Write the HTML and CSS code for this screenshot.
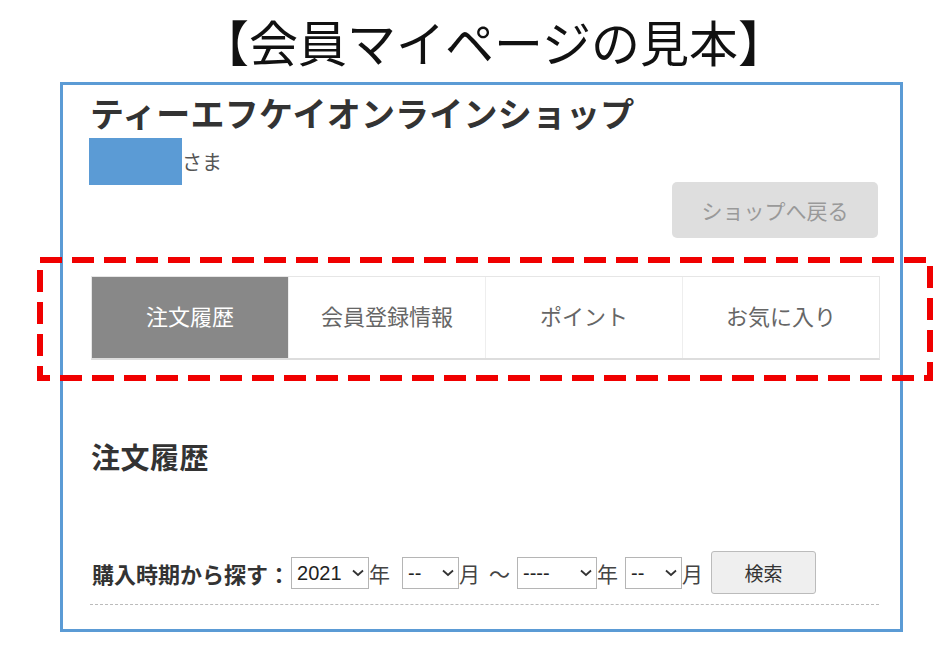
FILE: index.html
```html
<!DOCTYPE html>
<html lang="ja">
<head>
    <meta charset="UTF-8">
    <meta name="viewport" content="width=device-width, initial-scale=1.0">
    <title>会員マイページの見本</title>
    <link rel="stylesheet" href="styles.css">
</head>
<body>
    <h1 class="sample-title">【会員マイページの見本】</h1>

    <div class="mypage">
        <div class="shop-name">ティーエフケイオンラインショップ</div>
        <div class="user-row">
            <span class="user-mask"></span><span class="user-suffix">さま</span>
        </div>
        <div class="back-row">
            <a class="back-btn" href="#">ショップへ戻る</a>
        </div>

        <ul class="tabs">
            <li class="tab active">注文履歴</li>
            <li class="tab">会員登録情報</li>
            <li class="tab">ポイント</li>
            <li class="tab">お気に入り</li>
        </ul>

        <h2 class="section-title">注文履歴</h2>

        <form class="search-row">
            <span class="search-label">購入時期から探す：</span>
            <select class="sel sel-year"><option>2021</option></select><span class="unit">年</span>
            <select class="sel sel-month"><option>--</option></select><span class="unit">月</span>
            <span class="tilde">～</span>
            <select class="sel sel-year2"><option>----</option></select><span class="unit">年</span>
            <select class="sel sel-month sel-month2"><option>--</option></select><span class="unit">月</span>
            <button type="button" class="search-btn">検索</button>
        </form>
    </div>

    <!-- 赤い点線の注目枠 -->
    <svg class="highlight" width="896" height="124" viewBox="0 0 896 124">
        <rect x="3" y="3" width="890" height="118" fill="none" stroke="#f00000" stroke-width="6" stroke-dasharray="22 10"/>
    </svg>
</body>
</html>
```

FILE: styles.css
```css
body {
    margin: 0;
    background-color: #fff;
    font-family: "Noto Sans CJK JP", "Liberation Sans", sans-serif;
    color: #333;
    position: relative;
    width: 946px;
    height: 653px;
    overflow: hidden;
}
.sample-title {
    margin: 0;
    padding: 11px 0 0 200px;
    font-size: 49px;
    font-weight: normal;
    line-height: 59px;
    height: 70px;
    box-sizing: border-box;
    color: #111;
}
.mypage {
    box-sizing: border-box;
    margin: 12px 0 0 60px;
    width: 843px;
    height: 550px;
    border: 3px solid #5b9bd5;
    padding: 8px 20px 0 28px;
}
.shop-name {
    font-size: 34px;
    font-weight: bold;
    line-height: 40px;
    color: #333;
    margin-left: -1px;
    letter-spacing: 0.2px;
}
.user-row {
    display: flex;
    align-items: center;
    height: 44px;
    margin-top: 5px;
}
.user-mask {
    display: inline-block;
    width: 93px;
    height: 47px;
    background-color: #5b9bd5;
    margin-left: -2px;
    align-self: flex-start;
}
.user-suffix {
    font-size: 20px;
    color: #555;
    margin-top: 2px;
}
.back-row {
    display: flex;
    justify-content: flex-end;
}
.back-btn {
    display: flex;
    align-items: center;
    justify-content: center;
    width: 206px;
    height: 56px;
    background-color: #dedede;
    border-radius: 5px;
    color: #999;
    font-size: 21px;
    text-decoration: none;
    margin-right: 2px;
}
.tabs {
    list-style: none;
    display: flex;
    margin: 38px 0 0 0;
    padding: 0;
    width: 789px;
    height: 84px;
    box-sizing: border-box;
    border: 1px solid #e6e6e6;
    border-bottom: 2px solid #ddd;
}
.tab {
    flex: 1;
    display: flex;
    align-items: center;
    justify-content: center;
    padding-bottom: 6px;
    font-size: 22px;
    color: #666;
    border-left: 1px solid #eee;
}
.tab:first-child {
    border-left: none;
}
.tab.active {
    background-color: #888;
    color: #fff;
}
.section-title {
    margin: 78px 0 0 0;
    font-size: 29px;
    line-height: 36px;
    font-weight: bold;
    color: #333;
    letter-spacing: 0.5px;
}
.search-row {
    display: flex;
    align-items: center;
    margin: 77px 0 0 -1px;
    width: 789px;
    padding-bottom: 10px;
    border-bottom: 1px dashed #bbb;
    font-size: 21px;
    color: #333;
}
.search-label {
    font-size: 22px;
    font-weight: bold;
    color: #333;
    margin-left: 2px;
}
.sel {
    -webkit-appearance: none;
    appearance: none;
    box-sizing: border-box;
    height: 32px;
    border: 1px solid #b5b5b5;
    border-radius: 0;
    background-color: #fff;
    background-image: url("data:image/svg+xml,%3Csvg xmlns='http://www.w3.org/2000/svg' width='12' height='8' viewBox='0 0 12 8'%3E%3Cpath d='M1 1.5 L6 6 L11 1.5' fill='none' stroke='%23333' stroke-width='1.8'/%3E%3C/svg%3E");
    background-repeat: no-repeat;
    background-position: right 4px center;
    font-family: "Liberation Sans", "Noto Sans CJK JP", sans-serif;
    font-size: 20px;
    color: #222;
    padding: 0 0 0 5px;
}
.sel-year { width: 78px; margin-left: 1px; }
.sel-month { width: 57px; margin-left: 12px; }
.sel-month2 { margin-left: 7px; }
.sel-year2 { width: 80px; }
.unit {
    color: #444;
}
.tilde {
    margin: 0 7px 0 9px;
    color: #444;
}
.search-btn {
    margin-left: 8px;
    width: 105px;
    height: 43px;
    background-color: #efefef;
    border: 1px solid #bbb;
    border-radius: 3px;
    font-family: "Noto Sans CJK JP", sans-serif;
    font-size: 19px;
    color: #333;
}
.highlight {
    position: absolute;
    left: 37px;
    top: 257px;
}
```
